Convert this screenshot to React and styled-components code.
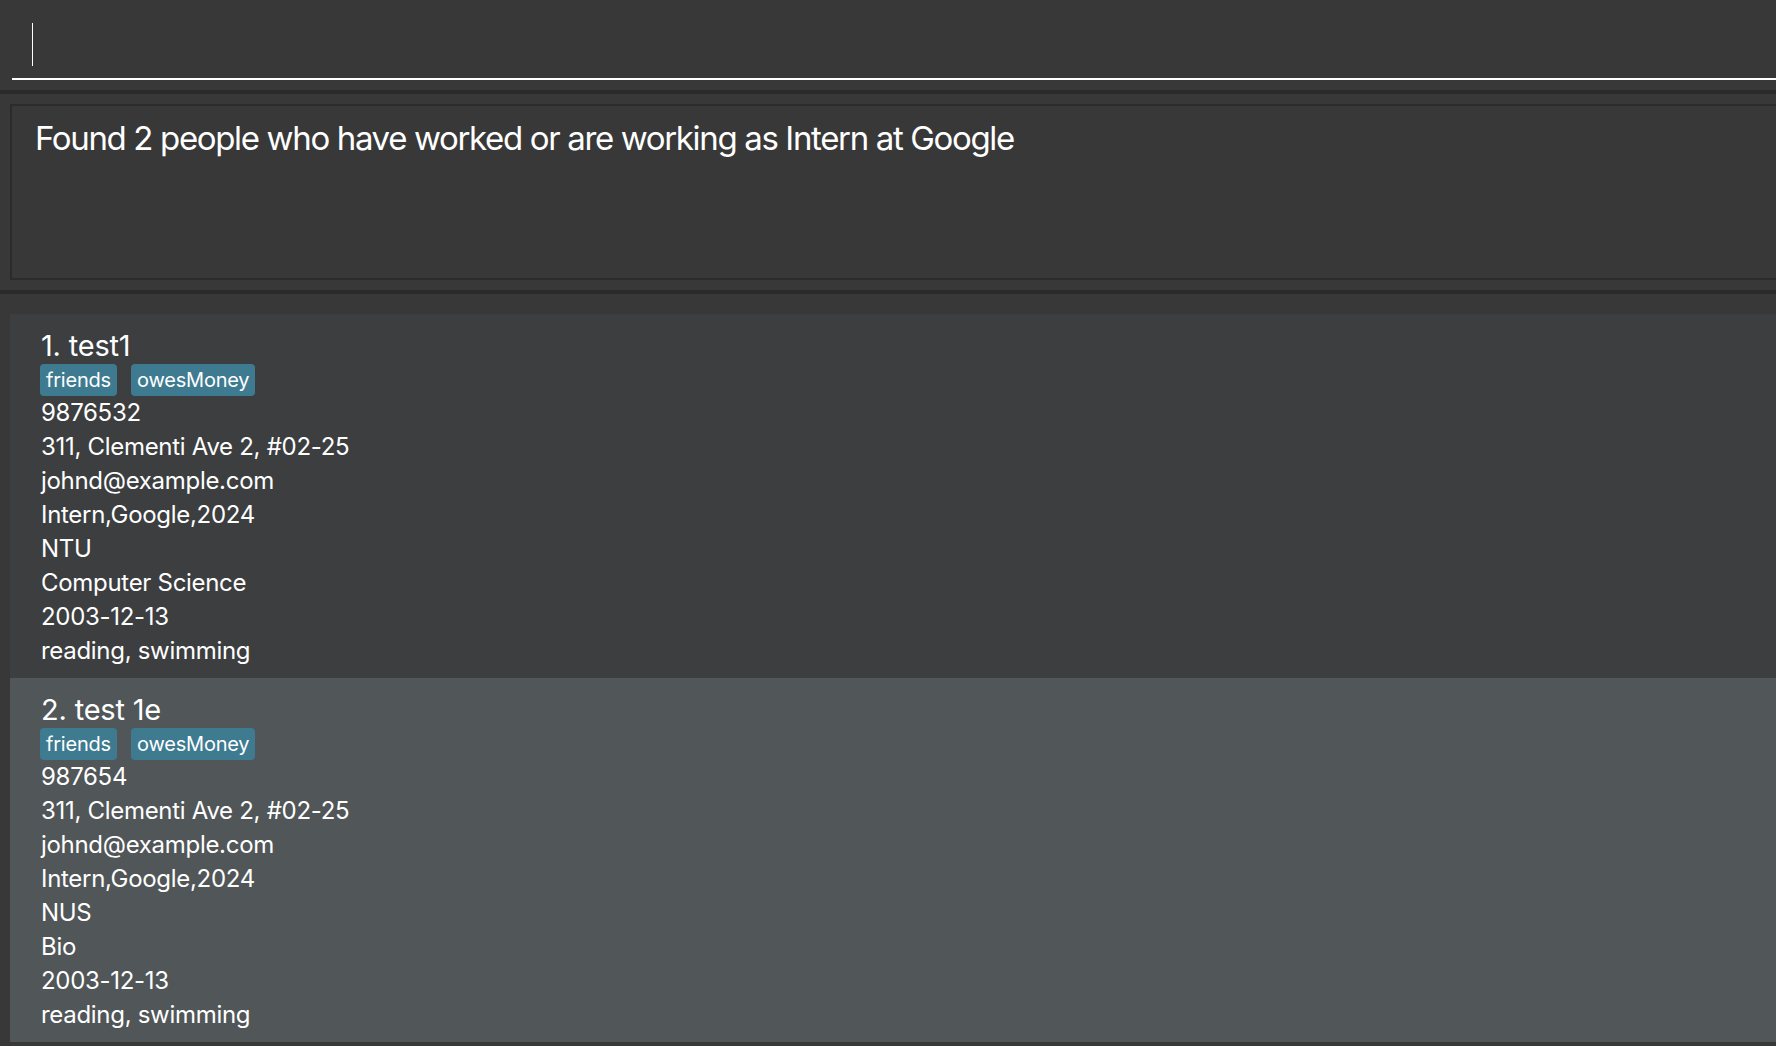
import styled, { createGlobalStyle } from "styled-components";

const GlobalStyle = createGlobalStyle`
  html, body {
    margin: 0;
    padding: 0;
    background: #383838;
  }
  body {
    font-family: Inter, "Noto Sans", "Liberation Sans", sans-serif;
    color: #ffffff;
    overflow: hidden;
  }
`;

const people = [
  {
    name: "test1",
    tags: ["friends", "owesMoney"],
    details: [
      "9876532",
      "311, Clementi Ave 2, #02-25",
      "johnd@example.com",
      "Intern,Google,2024",
      "NTU",
      "Computer Science",
      "2003-12-13",
      "reading, swimming",
    ],
  },
  {
    name: "test 1e",
    tags: ["friends", "owesMoney"],
    details: [
      "987654",
      "311, Clementi Ave 2, #02-25",
      "johnd@example.com",
      "Intern,Google,2024",
      "NUS",
      "Bio",
      "2003-12-13",
      "reading, swimming",
    ],
  },
];

function App() {
  return (
    <>
      <GlobalStyle />
      <Window>
        <CommandBox>
          <Caret />
        </CommandBox>
        <Splitter />
        <ResultPane>
          <ResultBox>
            Found 2 people who have worked or are working as Intern at Google
          </ResultBox>
        </ResultPane>
        <Splitter />
        <ListPane>
          {people.map((person, i) => (
            <PersonCard key={person.name} $odd={i % 2 === 1}>
              <Name>
                {i + 1}. {person.name}
              </Name>
              <Tags>
                {person.tags.map((tag) => (
                  <Tag key={tag}>{tag}</Tag>
                ))}
              </Tags>
              {person.details.map((line, j) => (
                <Detail key={j}>{line}</Detail>
              ))}
            </PersonCard>
          ))}
        </ListPane>
      </Window>
    </>
  );
}
export default App;

const Window = styled.div`
  display: flex;
  flex-direction: column;
  height: 1046px;
  background: #383838;
  overflow: hidden;
`;

const CommandBox = styled.div`
  height: 80px;
  margin-left: 12px;
  border-bottom: 2px solid #ffffff;
  padding-left: 20px;
  padding-top: 23px;
  box-sizing: border-box;
  flex-shrink: 0;
`;

const Caret = styled.div`
  width: 1px;
  height: 43px;
  background: #ffffff;
`;

const Splitter = styled.div`
  height: 4px;
  margin-top: 10px;
  background: #2a2a2a;
  flex-shrink: 0;
`;

const ResultPane = styled.div`
  padding: 10px 0 0 10px;
  flex-shrink: 0;
`;

const ResultBox = styled.div`
  height: 176px;
  box-sizing: border-box;
  border: 2px solid #2b2b2b;
  border-right: none;
  padding: 12px 0 0 23px;
  font-size: 33px;
  line-height: 40px;
  letter-spacing: -1.35px;
  white-space: nowrap;
`;

const ListPane = styled.div`
  padding: 20px 0 0 10px;
  display: flex;
  flex-direction: column;
`;

const PersonCard = styled.div`
  height: 364px;
  box-sizing: border-box;
  padding: 13px 0 0 31px;
  background: ${({ $odd }) => ($odd ? "#515658" : "#3c3e3f")};
  flex-shrink: 0;
`;

const Name = styled.div`
  font-size: 29px;
  line-height: 37px;
  letter-spacing: -0.2px;
`;

const Tags = styled.div`
  display: flex;
  gap: 14px;
  margin-left: -1px;
`;

const Tag = styled.span`
  display: inline-flex;
  align-items: center;
  height: 32px;
  padding: 0 6px;
  border-radius: 4px;
  background: #3e7b91;
  font-size: 20px;
  letter-spacing: -0.2px;
`;

const Detail = styled.div`
  font-size: 24px;
  line-height: 34px;
  letter-spacing: -0.3px;
`;
